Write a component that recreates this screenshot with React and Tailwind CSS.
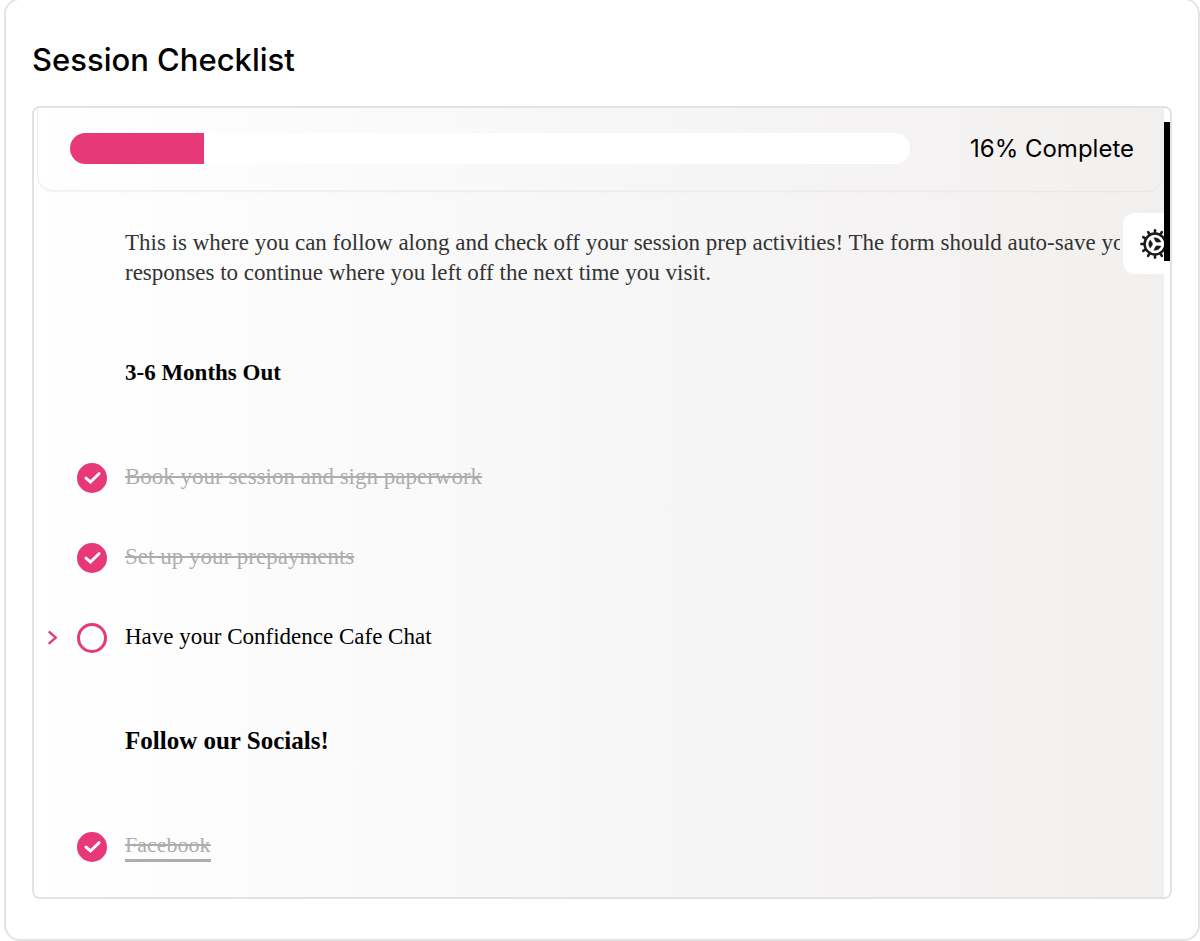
import React, { useState } from "react";

const initialItems = [
  { id: "months", type: "heading", label: "3-6 Months Out" },
  { id: "book", type: "task", label: "Book your session and sign paperwork", done: true },
  { id: "prepay", type: "task", label: "Set up your prepayments", done: true },
  { id: "chat", type: "task", label: "Have your Confidence Cafe Chat", done: false, expandable: true },
  { id: "socials", type: "heading", label: "Follow our Socials!", large: true },
  { id: "facebook", type: "task", label: "Facebook", done: true, link: true },
];

const GEAR_TEETH = [0, 30, 60, 90, 120, 150, 180, 210, 240, 270, 300, 330];

function GearIcon() {
  return (
    <svg viewBox="0 0 30 30" className="w-[30px] h-[30px] shrink-0" fill="none" stroke="#1a1a1a" aria-hidden="true">
      {GEAR_TEETH.map((angle) => (
        <path key={angle} d="M15 4V1.4" strokeWidth="2.6" strokeLinecap="round" transform={`rotate(${angle} 15 15)`} />
      ))}
      <circle cx="15" cy="15" r="10.4" strokeWidth="2.5" />
      {/* dark cut-outs between the three spokes */}
      {[30, 150, 270].map((angle) => (
        <path
          key={angle}
          d="M10.8 10.2Q15 7 19.2 10.2L16 12.4Q15 12.8 14 12.4Z"
          fill="#1a1a1a"
          strokeWidth="0.3"
          strokeLinejoin="round"
          transform={`rotate(${angle} 15 15)`}
        />
      ))}
    </svg>
  );
}

function ProgressHeader({ percent }) {
  return (
    <header className="ml-[3px] mr-0.5 flex items-center gap-15 rounded-b-2xl border-l border-b border-[#f0eff0] pt-[25px] pb-[26px] pl-8 pr-7 shadow-xs">
      <div
        role="progressbar"
        aria-label="Checklist progress"
        aria-valuenow={percent}
        className="h-[31px] flex-1 overflow-hidden rounded-full bg-white"
      >
        <div className="h-full bg-[#e73878]" style={{ width: `${percent}%` }} />
      </div>
      <span className="font-[Inter,sans-serif] text-[24px] leading-[31px] text-black">{percent}% Complete</span>
    </header>
  );
}

function TaskRow({ item, onToggle }) {
  const tone = item.done ? "text-[#adadad] line-through" : "text-black";
  const size = item.link ? "text-[22px]" : "text-[23px]";

  return (
    <li className="flex items-center py-6">
      <div className="flex w-[43px] justify-center pr-1.5">
        {item.expandable && (
          <button type="button" aria-label="Show details" className="cursor-pointer">
            <svg viewBox="0 0 10 14" className="h-[14px] w-[10px]" fill="none" stroke="#e73878" strokeWidth="2.4" aria-hidden="true">
              <path d="M1.5 1.2L7.8 6.7L1.5 12.2" strokeLinecap="round" strokeLinejoin="round" />
            </svg>
          </button>
        )}
      </div>
      <span className="relative flex">
        <input
          id={item.id}
          type="checkbox"
          checked={item.done}
          onChange={() => onToggle(item.id)}
          className="h-[30px] w-[30px] cursor-pointer appearance-none rounded-full border-3 border-[#e73878] bg-white checked:bg-[#e73878]"
        />
        {item.done && (
          <svg viewBox="0 0 30 30" className="pointer-events-none absolute inset-0" fill="none" stroke="white" strokeWidth="3" aria-hidden="true">
            <path d="M9 15.2L13.5 19L22 10.7" strokeLinecap="round" strokeLinejoin="miter" />
          </svg>
        )}
      </span>
      <label htmlFor={item.id} className={`ml-[18px] cursor-pointer pb-0.5 leading-[30px] ${size} ${tone}`}>
        {item.link ? (
          <a href="#facebook" className="block border-b-3 border-[#adadad] leading-[29px] line-through">
            {item.label}
          </a>
        ) : (
          item.label
        )}
      </label>
    </li>
  );
}

function SectionHeading({ item }) {
  return (
    <li className="my-6 py-6 pl-[91px] first:mt-0">
      <h2 className={`pb-0.5 font-bold leading-[30px] text-black ${item.large ? "text-[25px]" : "text-[23px]"}`}>
        {item.label}
      </h2>
    </li>
  );
}

export default function App() {
  const [items, setItems] = useState(initialItems);

  const toggle = (id) =>
    setItems((prev) => prev.map((item) => (item.id === id ? { ...item, done: !item.done } : item)));

  return (
    <main className="overflow-hidden bg-white pl-1">
      <section className="-mt-0.5 rounded-2xl border-2 border-[#e4e4e4] px-[26px] pb-10">
        <h1 className="pt-[42px] pb-7 font-[Inter,sans-serif] text-[31px] font-medium leading-9 text-black">
          Session Checklist
        </h1>

        <div className="flex overflow-hidden rounded-lg border-2 border-[#e2e2e2]">
          <div className="relative min-w-0 flex-1 bg-linear-to-r from-white via-[#f7f6f6] via-55% to-[#f2f0ef]">
            <ProgressHeader percent={16} />

            <div className="pb-[9px] font-['Liberation_Serif',serif]">
              <p className="pt-[37px] pr-4 pb-[46px] pl-[91px] text-[23px] leading-[30px] text-[#333333]">
                This is where you can follow along and check off your session prep activities! The form should auto-save
                your responses to continue where you left off the next time you visit.
              </p>
              <ul>
                {items.map((item) =>
                  item.type === "heading" ? (
                    <SectionHeading key={item.id} item={item} />
                  ) : (
                    <TaskRow key={item.id} item={item} onToggle={toggle} />
                  )
                )}
              </ul>
            </div>

            <div className="absolute top-[105px] right-0 bg-[#f3f1f0] pl-[3px]">
              <button
                type="button"
                aria-label="Settings"
                className="flex h-[61px] w-[41px] cursor-pointer items-center overflow-hidden rounded-l-xl bg-white pl-[17px]"
              >
                <GearIcon />
              </button>
            </div>
          </div>

          {/* scroll track */}
          <div className="w-1.5 bg-white pt-[14px]">
            <div className="h-[139px] bg-black" />
          </div>
        </div>
      </section>
    </main>
  );
}
